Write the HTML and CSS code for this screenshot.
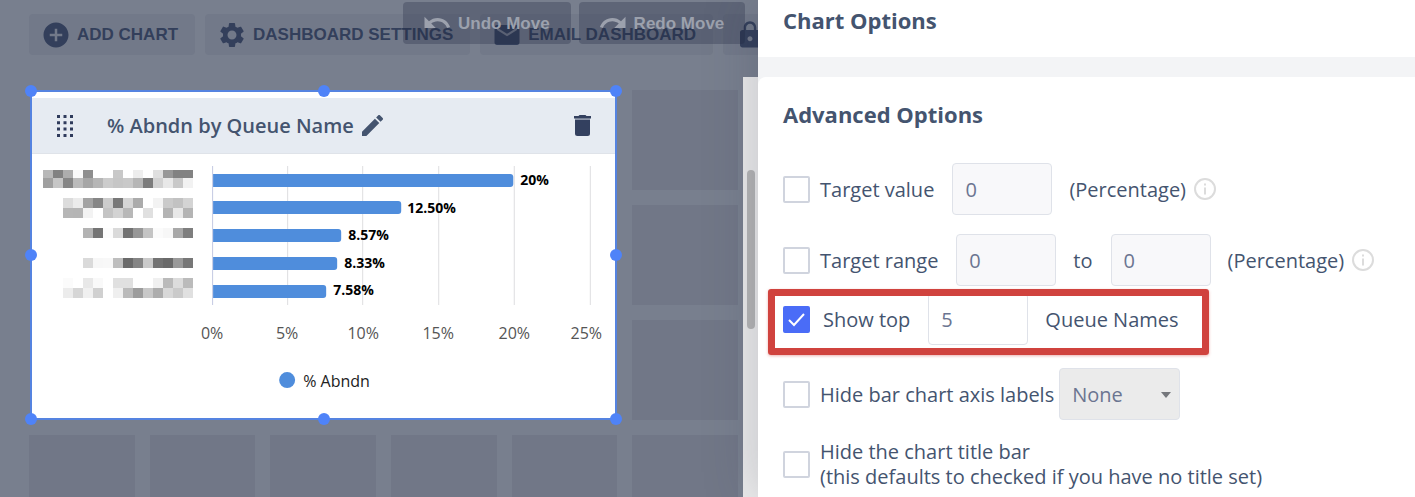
FILE: index.html
```
<!DOCTYPE html>
<html lang="en">
<head>
<meta charset="utf-8">
<title>Chart Options</title>
<link rel="stylesheet" href="styles.css">
</head>
<body>
<main class="canvas">
  <nav class="toolbar">
    <button class="tool" type="button"><svg class="icon" viewBox="0 0 24 24"><path d="M12 2C6.48 2 2 6.48 2 12s4.48 10 10 10 10-4.48 10-10S17.52 2 12 2zm5 11h-4v4h-2v-4H7v-2h4V7h2v4h4v2z"/></svg>ADD CHART</button>
    <button class="tool" type="button"><svg class="icon" viewBox="0 0 24 24"><path d="M19.14 12.94c.04-.3.06-.61.06-.94 0-.32-.02-.64-.07-.94l2.03-1.58c.18-.14.23-.41.12-.61l-1.92-3.32c-.12-.22-.37-.29-.59-.22l-2.39.96c-.5-.38-1.03-.7-1.62-.94l-.36-2.54c-.04-.24-.24-.41-.48-.41h-3.84c-.24 0-.43.17-.47.41l-.36 2.54c-.59.24-1.13.57-1.62.94l-2.39-.96c-.22-.08-.47 0-.59.22L2.74 8.87c-.12.21-.08.47.12.61l2.03 1.58c-.05.3-.09.63-.09.94s.02.64.07.94l-2.03 1.58c-.18.14-.23.41-.12.61l1.92 3.32c.12.22.37.29.59.22l2.39-.96c.5.38 1.03.7 1.62.94l.36 2.54c.05.24.24.41.48.41h3.84c.24 0 .44-.17.47-.41l.36-2.54c.59-.24 1.13-.56 1.62-.94l2.39.96c.22.08.47 0 .59-.22l1.92-3.32c.12-.22.07-.47-.12-.61l-2.01-1.58zM12 15.6c-1.98 0-3.6-1.62-3.6-3.6s1.62-3.6 3.6-3.6 3.6 1.62 3.6 3.6-1.62 3.6-3.6 3.6z"/></svg>DASHBOARD SETTINGS</button>
    <button class="tool" type="button"><svg class="icon" viewBox="0 0 24 24"><path d="M20 4H4c-1.100 0-1.990.9-1.990 2L2 18c0 1.100.9 2 2 2h16c1.100 0 2-.9 2-2V6c0-1.100-.9-2-2-2zm0 4l-8 5-8-5V6l8 5 8-5v2z"/></svg>EMAIL DASHBOARD</button>
    <button class="tool" type="button" aria-label="Lock dashboard"><svg class="icon" viewBox="0 0 24 24"><path d="M18 8h-1V6c0-2.760-2.240-5-5-5S7 3.240 7 6v2H6c-1.100 0-2 .9-2 2v10c0 1.100.9 2 2 2h12c1.100 0 2-.9 2-2V10c0-1.100-.9-2-2-2zm-6 9c-1.100 0-2-.9-2-2s.9-2 2-2 2 .9 2 2-.9 2-2 2zm3.100-9H8.900V6c0-1.710 1.390-3.100 3.100-3.100s3.100 1.390 3.100 3.100v2z"/></svg></button>
  </nav>
  <div class="history">
    <button class="history-button" type="button"><svg class="icon" viewBox="0 0 24 24"><path d="M12.500 8c-2.650 0-5.050.99-6.900 2.600L2 7v9h9l-3.620-3.620c1.390-1.160 3.160-1.880 5.120-1.880 3.540 0 6.550 2.310 7.600 5.500l2.370-.78C21.080 11.030 17.150 8 12.500 8z"/></svg>Undo Move</button>
    <button class="history-button" type="button"><svg class="icon" viewBox="0 0 24 24"><path d="M18.400 10.600C16.550 8.990 14.150 8 11.500 8c-4.650 0-8.580 3.030-9.960 7.220L3.900 16c1.050-3.190 4.050-5.500 7.600-5.500 1.950 0 3.730.72 5.120 1.880L13 16h9V7l-3.600 3.600z"/></svg>Redo Move</button>
  </div>

  <div class="stage">
    <div class="tiles">
      <article class="card">
        <header class="card-head">
          <svg class="grip" viewBox="0 0 16 22"><path d="M0 0h3v3H0zM6.500 0h3v3h-3zM13 0h3v3h-3zM0 6.300h3v3H0zM6.500 6.300h3v3h-3zM13 6.300h3v3h-3zM0 12.600h3v3H0zM6.500 12.600h3v3h-3zM13 12.600h3v3h-3zM0 19h3v3H0zM6.500 19h3v3h-3zM13 19h3v3h-3z"/></svg>
          <h2 class="card-title">% Abndn by Queue Name</h2>
          <button class="icon-button edit" type="button" aria-label="Edit title"><svg viewBox="3 3 18 18"><path d="M3 17.250V21h3.750L17.810 9.940l-3.750-3.750L3 17.250zM20.710 7.040c.39-.39.39-1.020 0-1.410l-2.340-2.340c-.39-.39-1.020-.39-1.410 0l-1.830 1.830 3.750 3.750 1.830-1.830z"/></svg></button>
          <button class="icon-button remove" type="button" aria-label="Delete chart"><svg viewBox="0 0 17 21"><path opacity=".5" d="M1 3.500h15V5H1z"/><path d="M1 5h15v13.500a2.500 2.500 0 0 1-2.500 2.500h-10A2.500 2.500 0 0 1 1 18.500zM0 1h4.500l1-1h6l1 1H17v2.500H0z"/></svg></button>
        </header>
        <svg class="chart" viewBox="0 0 583 264" role="img" aria-label="% Abndn by Queue Name">
          <g id="names" shape-rendering="crispEdges"></g>
          <path class="gridline" d="M255.500 12v139M330.500 12v139M406.500 12v139M482 12v139M558 12v139"/>
          <path class="axis" d="M180.500 12v139"/>
          <g class="bars">
            <path d="M181 20h297a3 3 0 0 1 3 3v7a3 3 0 0 1-3 3H181z"/>
            <path d="M181 47h185a3 3 0 0 1 3 3v7a3 3 0 0 1-3 3H181z"/>
            <path d="M181 75h125a3 3 0 0 1 3 3v7a3 3 0 0 1-3 3H181z"/>
            <path d="M181 103h121a3 3 0 0 1 3 3v7a3 3 0 0 1-3 3H181z"/>
            <path d="M181 131h110a3 3 0 0 1 3 3v7a3 3 0 0 1-3 3H181z"/>
          </g>
          <g class="values">
            <text x="488" y="31">20%</text>
            <text x="375" y="59">12.50%</text>
            <text x="316" y="86">8.57%</text>
            <text x="312" y="114">8.33%</text>
            <text x="301" y="141">7.58%</text>
          </g>
          <g class="ticks">
            <text x="180" y="185">0%</text>
            <text x="255" y="185">5%</text>
            <text x="331" y="185">10%</text>
            <text x="406" y="185">15%</text>
            <text x="482" y="185">20%</text>
            <text x="554" y="185">25%</text>
          </g>
          <circle class="legend-dot" cx="255" cy="226" r="8"/>
          <text class="legend" x="271" y="233">% Abndn</text>
        </svg>
        <i class="handle top left"></i><i class="handle top mid"></i><i class="handle top right"></i>
        <i class="handle center left"></i><i class="handle center right"></i>
        <i class="handle bottom left"></i><i class="handle bottom mid"></i><i class="handle bottom right"></i>
      </article>
      <div class="tile"></div><div class="tile"></div><div class="tile"></div>
      <div class="tile"></div><div class="tile"></div><div class="tile"></div>
      <div class="tile"></div><div class="tile"></div><div class="tile"></div>
    </div>
    <div class="scrollbar"><div class="thumb"></div></div>
  </div>
</main>

<aside class="panel">
  <header class="panel-head"><h1 class="heading">Chart Options</h1></header>
  <form class="panel-body">
    <h2 class="heading">Advanced Options</h2>
    <div class="row">
      <input class="check" type="checkbox" id="target-value">
      <label for="target-value">Target value</label>
      <input class="field" type="text" value="0" aria-label="Target value amount">
      <span>(Percentage)</span>
      <svg class="info" viewBox="0 0 22 22"><circle cx="11" cy="11" r="10"/><path d="M11 9.500v7M11 5.500v2"/></svg>
    </div>
    <div class="row">
      <input class="check" type="checkbox" id="target-range">
      <label for="target-range">Target range</label>
      <input class="field" type="text" value="0" aria-label="Range start">
      <span>to</span>
      <input class="field" type="text" value="0" aria-label="Range end">
      <span>(Percentage)</span>
      <svg class="info" viewBox="0 0 22 22"><circle cx="11" cy="11" r="10"/><path d="M11 9.500v7M11 5.500v2"/></svg>
    </div>
    <div class="row marked">
      <span class="check-wrap"><input class="check" type="checkbox" id="show-top" checked><svg class="tick" viewBox="0 0 27 27"><path d="M6 14l5 5 10-11"/></svg></span>
      <label for="show-top">Show top</label>
      <input class="field active" type="text" value="5" aria-label="Number of queue names">
      <span>Queue Names</span>
    </div>
    <div class="row">
      <input class="check" type="checkbox" id="hide-axis">
      <label for="hide-axis">Hide bar chart axis labels</label>
      <div class="select-wrap"><select class="select" aria-label="Axis labels"><option>None</option></select></div>
    </div>
    <div class="row">
      <input class="check" type="checkbox" id="hide-title">
      <label for="hide-title">Hide the chart title bar<br>(this defaults to checked if you have no title set)</label>
    </div>
  </form>
</aside>
<script src="script.js"></script>
</body>
</html>
```
FILE: styles.css
```
* { box-sizing: border-box; }

body {
  margin: 0;
  display: flex;
  height: 100vh;
  overflow: hidden;
  font-family: "Open Sans", "Noto Sans", sans-serif;
  font-size: 20px;
  line-height: 25px;
  color: #44546f;
}

button, input, select { font: inherit; color: inherit; }
button { border: 0; cursor: pointer; white-space: nowrap; }
h1, h2 { margin: 0; }

/* Dashboard canvas */
.canvas {
  position: relative;
  flex: 1;
  min-width: 0;
  display: flex;
  flex-direction: column;
  overflow: hidden;
  background: #787f8e;
}

.toolbar {
  display: flex;
  gap: 10px;
  padding: 14px 0 22px 29px;
}

.tool, .history-button {
  display: flex;
  flex: none;
  align-items: center;
  gap: 6px;
  height: 41px;
  border-radius: 4px;
  font-family: "Liberation Sans", Arial, sans-serif;
  font-size: 17px;
  font-weight: bold;
}

.tool {
  padding: 0 17px 0 12px;
  background: #727989;
  color: #333f5b;
}

.icon { width: 30px; height: 30px; fill: currentColor; }

.history {
  position: absolute;
  top: 2px;
  left: 403px;
  display: flex;
  gap: 8px;
}

.history-button {
  height: 42px;
  padding: 0 21px 0 19px;
  background: rgba(30, 35, 60, 0.28);
  color: #9ca1ad;
}

.stage { flex: 1; display: flex; min-height: 0; }

.tiles {
  flex: 1;
  display: grid;
  grid-template-columns: repeat(6, 1fr);
  grid-auto-rows: 100px;
  gap: 15px;
  padding: 13px 5px 0 29px;
}

.tile { background: #717787; }

.card {
  position: relative;
  grid-column: 1 / span 5;
  grid-row: 1 / span 3;
  margin-left: 1px;
  padding-top: 6px;
  border: 2px solid #5583e0;
  background: #fff;
}

.card-head {
  display: flex;
  align-items: center;
  height: 56px;
  padding: 0 24px 0 25px;
  background: #e6ebf2;
  border-bottom: 1px solid #dfe3e9;
}

.grip { width: 16px; height: 22px; margin-right: 34px; fill: #2f3b5c; }
.card-title { font-size: 20px; font-weight: 600; white-space: nowrap; }
.icon-button { display: flex; padding: 0; background: none; color: #33405f; }
.icon-button svg { fill: currentColor; }
.edit { margin-left: 8px; color: #44546f; }
.edit svg { width: 21px; height: 21px; }
.remove { margin-left: auto; }
.remove svg { width: 17px; height: 21px; }

.chart { display: block; width: 100%; }
.gridline { stroke: #dedee0; stroke-width: 1; }
.axis { stroke: #c3c9e2; stroke-width: 1; }
.bars { fill: #4f8ddc; }
.values { font-size: 14px; font-weight: 700; fill: #000; }
.ticks { font-size: 16px; fill: #555; text-anchor: middle; }
.legend { font-size: 16px; fill: #222; }
.legend-dot { fill: #4f8ddc; }

.handle {
  position: absolute;
  width: 12px;
  height: 12px;
  border-radius: 50%;
  background: #4f83f8;
}
.handle.top { top: -7px; }
.handle.bottom { bottom: -7px; }
.handle.center { top: calc(50% - 6px); }
.handle.left { left: -7px; }
.handle.right { right: -7px; }
.handle.mid { left: calc(50% - 6px); }

.scrollbar {
  width: 15px;
  padding: 93px 3px 0 4px;
  background: #ececec;
}
.thumb { height: 159px; border-radius: 4px; background: #b6b6b6; }

/* Options panel */
.panel {
  position: relative;
  flex: 0 0 657px;
  display: flex;
  flex-direction: column;
  gap: 20px;
  background: #f3f4f6;
  box-shadow: 0 0 50px rgba(50, 56, 78, 0.25);
}

.panel-head { padding: 8px 25px 24px; background: #fff; }
.heading { font-size: 22px; line-height: 25px; font-weight: 700; }

.panel-body {
  flex: 1;
  padding: 25px 25px 0;
  background: #fff;
  border-radius: 8px 0 0 0;
}
.panel-body .heading { margin-bottom: 36px; }

.row {
  display: flex;
  align-items: center;
  width: max-content;
  margin-bottom: 19px;
}
.row label { margin-left: 10px; white-space: nowrap; }

.check {
  appearance: none;
  display: block;
  width: 27px;
  height: 27px;
  margin: 0;
  border: 2px solid #d0d4de;
  border-radius: 2px;
  background: #fff;
}
.check:checked { border-color: #4a6cf7; background: #4a6cf7; }
.check-wrap { position: relative; margin-right: 3px; }
.tick {
  position: absolute;
  inset: 0;
  fill: none;
  stroke: #fff;
  stroke-width: 2;
  pointer-events: none;
}

.field {
  width: 100px;
  height: 52px;
  margin: 0 17px 0 18px;
  padding: 0 12px;
  border: 1px solid #dfe2e9;
  border-radius: 4px;
  background: #f8f8fa;
  color: #6b7591;
}
.field.active { background: #fff; }

.info {
  width: 22px;
  height: 22px;
  margin-left: 8px;
  fill: none;
  stroke: #dcdcdc;
  stroke-width: 2;
}

.marked { position: relative; margin-top: -12px; margin-bottom: 23px; }
.marked::after {
  content: "";
  position: absolute;
  inset: -4px -30px -10px -15px;
  border: 7px solid #d0433e;
  border-radius: 3px;
  box-shadow: 0 1px 3px rgba(208, 67, 62, 0.4);
  pointer-events: none;
}

.select-wrap { position: relative; margin-left: 5px; }
.select-wrap::after {
  content: "";
  position: absolute;
  top: 24px;
  right: 9px;
  border: 5px solid transparent;
  border-top: 6px solid #75777c;
  border-bottom: 0;
  pointer-events: none;
}
.select {
  appearance: none;
  display: block;
  width: 121px;
  height: 52px;
  padding: 0 12px;
  border: 1px solid #dfe2e9;
  border-radius: 4px;
  background: #ebebeb;
  color: #6b7591;
}
```
FILE: script.js
```
// Obscured queue names: each row is a right-aligned strip of grey cells.
const cell = 10;
const right = 161;
const rows = [
  [16, 8, "b8 82 ad f9 8e ff ff c8 ff ed fd df 98 82 82"],
  [24, 10, "a0 c6 86 bb a6 b6 cc c6 c9 b6 7c d2 e8 c9 f2"],
  [44, 10, "dc eb a3 86 cc 78 d5 ab ff f3 ca c2 d4"],
  [54, 10, "b6 b5 f3 ff c4 d3 b8 ff e0 ff b4 e8 b4"],
  [74, 10, "b3 74 fc da 72 97 c4 fb f7 a8 7e"],
  [104, 10, "da f7 f8 be 6a 85 ca 73 6a 9a 77"],
  [124, 10, "fb ff e8 f9 ff e0 e0 ff ff f0 ba dc bb"],
  [134, 10, "ec d6 f0 d0 ff ef ba 9c c8 ad d8 ca e0"]
];
const names = document.getElementById("names");
for (const [y, height, shades] of rows) {
  const list = shades.split(" ");
  list.forEach((shade, i) => {
    const rect = document.createElementNS("http://www.w3.org/2000/svg", "rect");
    rect.setAttribute("x", right - (list.length - i) * cell);
    rect.setAttribute("y", y);
    rect.setAttribute("width", cell);
    rect.setAttribute("height", height);
    rect.setAttribute("fill", "#" + shade + shade + shade);
    names.appendChild(rect);
  });
}
```
